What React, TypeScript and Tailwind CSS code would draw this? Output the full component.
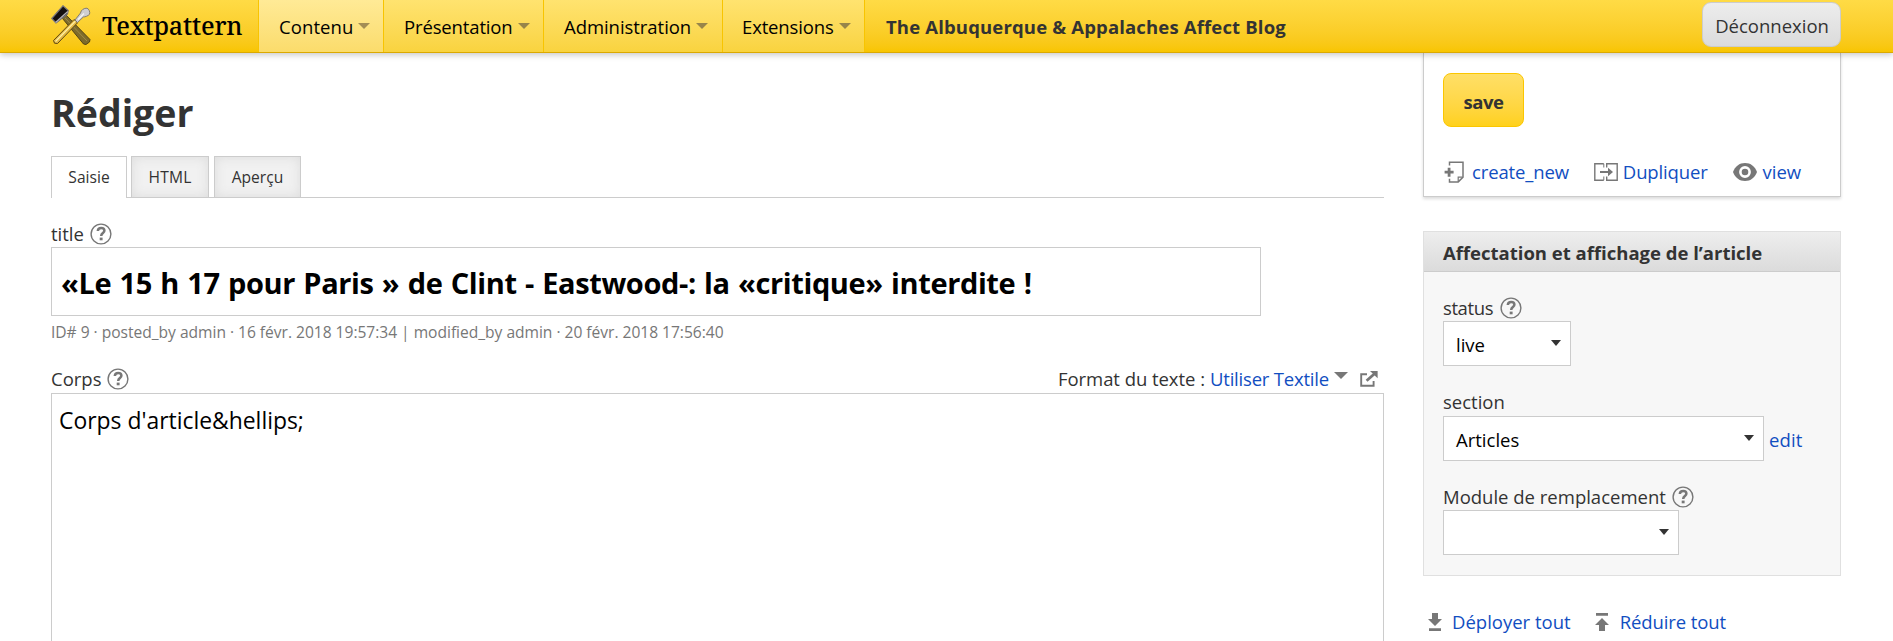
import type { ReactNode } from 'react';

function Logo() {
  return (
    <svg width="40" height="40" viewBox="0 0 40 40" className="shrink-0">
      <path d="M11.5 13.5 L15 10 L39 34.5 L38.5 37 L35 39.5 L32.5 39 Z" fill="#7d6b2b" stroke="#4a3c12" strokeWidth="0.9" />
      <path d="M14 13 L36 36" stroke="#a08c48" strokeWidth="1" />
      <path d="M0.8 13.5 L12 0.8 L17.2 5.5 L16.5 9 L5 18 Z" fill="#15100f" stroke="#77747a" strokeWidth="1.2" />
      <path d="M4.5 17.5 L16.8 6.5" stroke="#b4b2b5" strokeWidth="1.3" />
      <path d="M23 14.5 L26.5 17.8 L6.5 38.5 L3.5 38.2 L2.5 35.5 Z" fill="#e4ba45" stroke="#5f4813" strokeWidth="1" />
      <path d="M24.5 16 L4.5 36.5" stroke="#fff0a8" strokeWidth="1.1" />
      <path d="M24 15 L29.5 8 C30 5 33 3 36 3.2 C38 4 39.3 7 38.5 9.3 C37 11 34 12 32.3 12 L26.5 17.5 Z" fill="#cfced0" stroke="#77736c" strokeWidth="0.9" />
      <path d="M27 14.5 L33 8.5" stroke="#f4f4f4" strokeWidth="1.5" />
    </svg>
  );
}

function Caret({ className }: { className: string }) {
  return (
    <svg viewBox="0 0 12 6" preserveAspectRatio="none" className={`shrink-0 ${className}`}>
      <path d="M0 0H12L6 6Z" fill="currentColor" />
    </svg>
  );
}

function Help() {
  return (
    <svg width="22" height="22" viewBox="0 0 22 22" fill="none" stroke="#777" className="shrink-0">
      <circle cx="11" cy="11" r="9.9" strokeWidth="1.4" />
      <path d="M7.8 8C8 6 9.3 5.1 11.2 5.1C13.1 5.1 14.4 6.1 14.4 7.8C14.4 10 11.2 10.2 11.2 12.9" strokeWidth="2.5" />
      <path d="M9.7 14.6H12.6V17.3H9.7Z" fill="#777" stroke="none" />
    </svg>
  );
}

function NewDocIcon() {
  return (
    <svg width="20" height="22" viewBox="0 0 20 22" fill="none" stroke="#777" className="shrink-0">
      <path d="M5.5 4.5V1.3H19V16.2L14.2 20.9H5.5V17.8" strokeWidth="1.5" />
      <path d="M14.2 20.5V16.2H18.6" strokeWidth="1.2" />
      <path d="M0.6 11.2H9.6M5.1 6.7V15.7" strokeWidth="2.8" />
    </svg>
  );
}

function DuplicateIcon() {
  return (
    <svg width="24" height="18" viewBox="0 0 24 18" fill="none" stroke="#777" className="shrink-0">
      <path d="M9.8 0.8H0.8V17.2H9.8M12.7 4.5V0.8H23.2V17.2H12.7V13.5" strokeWidth="1.4" />
      <path d="M9.8 0.8V4.5M9.8 17.2V13.5" strokeWidth="1" />
      <path d="M6 9H17" strokeWidth="2" />
      <path d="M14 4.8L19 9L14 13.2Z" fill="#777" stroke="none" />
    </svg>
  );
}

function EyeIcon() {
  return (
    <svg width="24" height="18" viewBox="0 0 24 18" className="shrink-0">
      <path d="M0 9C2 3.4 6.4 0 12 0S22 3.4 24 9C22 14.6 17.6 18 12 18S2 14.6 0 9Z" fill="#777" />
      <circle cx="12" cy="9" r="4.6" fill="none" stroke="#fff" strokeWidth="2.6" />
    </svg>
  );
}

function ExternalIcon() {
  return (
    <svg width="18" height="16" viewBox="0 0 18 16" fill="none" stroke="#777" className="shrink-0">
      <path d="M7 3.2H1.2V14.8H13.6V10" strokeWidth="1.9" />
      <path d="M6.6 9.8L14.5 2.8" strokeWidth="2.8" />
      <path d="M10 0H17.6V7.2Z" fill="#777" stroke="none" />
    </svg>
  );
}

function ExpandIcon() {
  return (
    <svg width="14" height="18" viewBox="0 0 14 18" fill="#777" className="shrink-0">
      <path d="M4 0H10V6H14L7 13L0 6H4ZM1 15.3H13V18H1Z" />
    </svg>
  );
}

function CollapseIcon() {
  return (
    <svg width="14" height="18" viewBox="0 0 14 18" fill="#777" className="shrink-0">
      <path d="M1 0H13V2.7H1ZM7 5L14 12H10V18H4V12H0Z" />
    </svg>
  );
}

function MenuItem({ label, className, caret }: { label: string; className: string; caret: string }) {
  return (
    <a
      className={`flex h-[52px] items-center justify-between border-r border-[#f8c400] bg-linear-to-b pr-[13px] text-black ${className}`}
    >
      <span className="pt-[2px]">{label}</span>
      <Caret className={`h-[6px] w-[12px] ${caret}`} />
    </a>
  );
}

function SelectBox({ value, className }: { value: string; className: string }) {
  return (
    <div className={`flex h-[45px] items-center justify-between border border-[#ccc] bg-white pr-[9px] pl-[12px] text-black ${className}`}>
      <span className="pt-[2px]">{value}</span>
      <Caret className="mb-px h-[6px] w-[10px] text-[#333]" />
    </div>
  );
}

function Link({ children, className = '' }: { children: ReactNode; className?: string }) {
  return <a className={`text-[#114ec1] ${className}`}>{children}</a>;
}

export default function App() {
  return (
    <div className="flex h-screen flex-col overflow-hidden bg-white font-['Open_Sans','Noto_Sans',sans-serif] text-[18.5px] leading-[28px] whitespace-nowrap text-[#333]">
      <header className="z-10 flex h-[53px] shrink-0 items-start border-b border-[#dba900] bg-linear-to-b from-[#ffdb45] to-[#f8c500] pr-[52px] pl-[51px] shadow-[0_2px_6px_rgba(0,0,0,0.22)]">
        <div className="flex h-[50px] w-[207px] items-center">
          <Logo />
          <span className="pl-[11px] font-['Noto_Serif',serif] text-[25px] font-medium tracking-[-0.18px] text-black">Textpattern</span>
        </div>
        <nav className="flex border-l border-[#f8c400]">
          <MenuItem label="Contenu" caret="text-[#a38d55]" className="w-[125px] from-[#ffea96] to-[#fbdc6b] pl-[20px] tracking-[0.1px]" />
          <MenuItem label="Présentation" caret="text-[#97854a]" className="w-[160px] from-[#ffe36f] to-[#f9d33e] pl-[20px] tracking-[-0.14px]" />
          <MenuItem label="Administration" caret="text-[#97854a]" className="w-[179px] from-[#ffe36f] to-[#f9d33e] pr-[14px] pl-[20px] tracking-[-0.05px]" />
          <MenuItem label="Extensions" caret="text-[#97854a]" className="w-[142px] from-[#ffe36f] to-[#f9d33e] pl-[19px] tracking-[-0.15px]" />
        </nav>
        <div className="flex h-[52px] items-center pt-[2px] pl-[21px] font-bold tracking-[0.16px]">The Albuquerque &amp; Appalaches Affect Blog</div>
        <button className="mt-[2px] ml-auto flex h-[45px] w-[139px] items-center justify-center rounded-[9px] border border-[#ccc] bg-linear-to-b from-[#ededed] to-[#dbdbdb] pt-[2px] pl-px">
          Déconnexion
        </button>
      </header>

      <div className="flex justify-between pr-[52px] pl-[51px]">
        <main className="w-[1333px] pt-[35px]">
          <h1 className="text-[37.5px] leading-[50px] font-bold">Rédiger</h1>

          <div className="mt-[18px] flex h-[42px] border-b border-[#ccc] text-[15.6px]">
            <a className="mr-[4px] flex h-[42px] w-[76px] items-center justify-center border border-b-0 border-[#ccc] bg-white pb-px">Saisie</a>
            <a className="mr-[5px] flex h-[42px] w-[78px] items-center justify-center border border-[#ccc] bg-[#f1f1f1] tracking-[0.2px] shadow-[inset_0_0_12px_#dcdcdc]">
              HTML
            </a>
            <a className="flex h-[42px] w-[87px] items-center justify-center border border-[#ccc] bg-[#f1f1f1] shadow-[inset_0_0_12px_#dcdcdc]">
              Aperçu
            </a>
          </div>

          <div className="mt-[22px] flex h-[27px] items-center gap-[6px]">
            <span>title</span>
            <Help />
          </div>
          <div className="flex h-[69px] w-[1210px] items-center border border-[#ccc] bg-white pt-[2px] pl-[9px] text-[29px] font-bold tracking-[-0.39px] [word-spacing:1.2px] text-black">
            «Le 15 h 17 pour Paris » de Clint - Eastwood-: la «critique» interdite !
          </div>
          <p className="mt-[4px] text-[15.6px] leading-[24px] tracking-[-0.025px] text-[#777]">
            ID# 9 · posted_by admin · 16 févr. 2018 19:57:34 | modified_by admin · 20 févr. 2018 17:56:40
          </p>

          <div className="mt-[21px] flex h-[28px] items-center">
            <span>Corps</span>
            <span className="pl-[6px]">
              <Help />
            </span>
            <span className="ml-auto tracking-[-0.05px]">Format du texte :</span>
            <Link className="pl-[5px] tracking-[-0.2px]">Utiliser Textile</Link>
            <Caret className="mb-[8px] ml-[5px] h-[7px] w-[14px] text-[#777]" />
            <span className="mr-[6px] ml-[12px]">
              <ExternalIcon />
            </span>
          </div>
          <div className="h-[300px] border border-[#ccc] bg-white pt-[11px] pl-[7px] text-[22.9px] leading-[32px] text-black">
            Corps d'article&amp;hellips;
          </div>
        </main>

        <aside className="w-[418px]">
          <section className="h-[144px] border border-t-0 border-[#ccc] bg-white px-[19px] pt-[20px] shadow-[0_2px_3px_rgba(0,0,0,0.14)]">
            <button className="flex h-[54px] w-[81px] items-center justify-center rounded-[8px] border border-[#fbc600] bg-linear-to-b from-[#ffdf66] to-[#ffd11a] pt-[3px] font-bold tracking-[-0.4px]">
              save
            </button>
            <div className="mt-[31px] flex h-[28px] items-center">
              <span className="pl-[1px]">
                <NewDocIcon />
              </span>
              <Link className="pl-[8px] tracking-[-0.14px]">create_new</Link>
              <span className="pl-[25px]">
                <DuplicateIcon />
              </span>
              <Link className="pl-[5px] tracking-[-0.15px]">Dupliquer</Link>
              <span className="pl-[25px]">
                <EyeIcon />
              </span>
              <Link className="pl-[6px]">view</Link>
            </div>
          </section>

          <section className="mt-[34px] h-[345px] border border-[#e0e0e0] bg-[#f7f7f7]">
            <h2 className="flex h-[40px] items-center border-b border-[#ccc] bg-linear-to-b from-[#eeeeee] to-[#dbdbdb] pt-[2px] pl-[19px] font-bold">
              Affectation et affichage de l’article
            </h2>
            <div className="px-[19px]">
              <div className="mt-[22px] flex h-[27px] items-center">
                <span className="pr-[7px] tracking-[-0.4px]">status</span>
                <Help />
              </div>
              <SelectBox value="live" className="w-[128px]" />
              <div className="mt-[22px] h-[28px]">section</div>
              <div className="flex items-center">
                <SelectBox value="Articles" className="w-[321px]" />
                <Link className="pt-[2px] pl-[5px] tracking-[0.1px]">edit</Link>
              </div>
              <div className="mt-[22px] flex h-[27px] items-center gap-[6px]">
                <span>Module de remplacement</span>
                <Help />
              </div>
              <SelectBox value="" className="w-[236px]" />
            </div>
          </section>

          <div className="mt-[32px] flex h-[28px] items-center pl-[5px]">
            <ExpandIcon />
            <Link className="pl-[10px]">Déployer tout</Link>
            <span className="pl-[24px]">
              <CollapseIcon />
            </span>
            <Link className="pl-[11px] tracking-[-0.1px]">Réduire tout</Link>
          </div>
        </aside>
      </div>
    </div>
  );
}
